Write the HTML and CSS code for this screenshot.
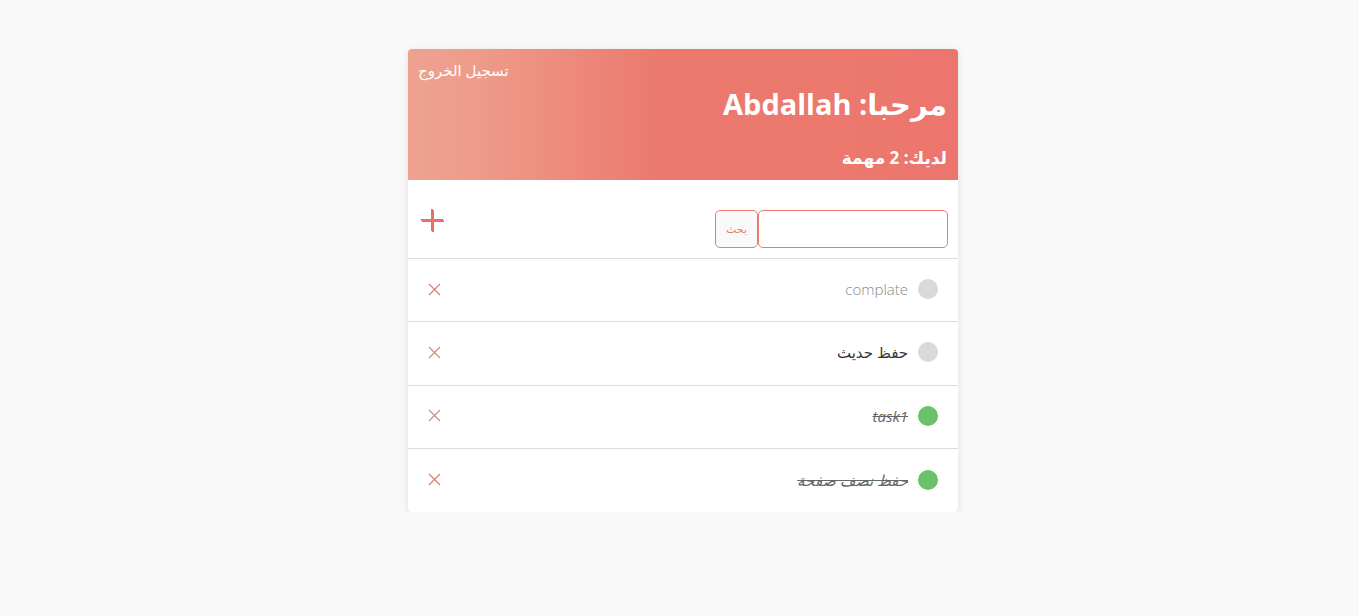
FILE: index.html
```html
<!DOCTYPE html>
<html lang="ar" dir="rtl">
<head>
<meta charset="utf-8">
<link rel="stylesheet" href="styles.css">
</head>
<body>
<div class="page">
<div class="card">
  <header class="head">
    <div class="logout-row"><a class="logout">تسجيل الخروج</a></div>
    <h1 class="title">مرحبا: Abdallah</h1>
    <h2 class="count">لديك: 2 مهمة</h2>
  </header>
  <div class="toolbar">
    <form class="search">
      <input class="search-input" type="text">
      <button class="search-btn" type="button">بحث</button>
    </form>
    <button class="add" type="button" aria-label="add">
      <svg width="26" height="26" viewBox="0 0 26 26">
        <g stroke="#7f8fd6" stroke-width="2"><line x1="13" y1="2" x2="13" y2="24"/><line x1="2" y1="13" x2="24" y2="13"/></g>
        <g stroke="#e8706a" stroke-width="2"><line x1="12" y1="1" x2="12" y2="23"/><line x1="1" y1="12" x2="23" y2="12"/></g>
      </svg>
    </button>
  </div>
  <ul class="tasks">
    <li class="task"><span class="dot"></span><span class="label light">complate</span><span class="del"><svg width="13" height="13" viewBox="0 0 13 13"><path d="M1 1L12 12M12 1L1 12" stroke="#ec6f6a" stroke-width="1.1"/></svg></span></li>
    <li class="task"><span class="dot"></span><span class="label">حفظ حديث</span><span class="del"><svg width="13" height="13" viewBox="0 0 13 13"><path d="M1 1L12 12M12 1L1 12" stroke="#c98a7a" stroke-width="1.1"/></svg></span></li>
    <li class="task"><span class="dot done"></span><span class="label struck italic">task1</span><span class="del"><svg width="13" height="13" viewBox="0 0 13 13"><path d="M1 1L12 12M12 1L1 12" stroke="#c98a7a" stroke-width="1.1"/></svg></span></li>
    <li class="task"><span class="dot done"></span><span class="label struck italic">حفظ نصف صفحة</span><span class="del"><svg width="13" height="13" viewBox="0 0 13 13"><path d="M1 1L12 12M12 1L1 12" stroke="#ec6f6a" stroke-width="1.1"/></svg></span></li>
  </ul>
</div>
</div>
</body>
</html>
```

FILE: styles.css
```css
* { box-sizing: border-box; }
body {
  margin: 0;
  background: #f9f9f9;
  font-family: "Open Sans", "DejaVu Sans", sans-serif;
  color: #333;
}
.page {
  display: flex;
  justify-content: center;
  padding: 49px 0 0 7px;
}
.card {
  width: 550px;
  background: #fff;
  border-radius: 4px;
  box-shadow: 0 2px 8px rgba(0,0,0,0.1);
  overflow: hidden;
}
.head {
  background: linear-gradient(to left, #ec766d 0%, #eb7a6e 55%, #ee9c8a 88%, #eea290 100%);
  color: #fff;
  padding: 10px 11px 10px;
  display: flex;
  flex-direction: column;
}
.logout-row { display: flex; justify-content: flex-end; }
.logout {
  font-size: 15px;
  line-height: 22px;
  color: #fff;
  margin-left: -1px;
}
.title {
  margin: 3px 0 0;
  font-size: 29px;
  line-height: 40px;
  font-weight: 700;
}
.count {
  margin: 22px 0 0;
  font-size: 17px;
  line-height: 24px;
  font-weight: 700;
}
.toolbar {
  display: flex;
  justify-content: space-between;
  align-items: flex-start;
  padding: 30px 10px 10px 12px;
  border-bottom: 1px solid #dddddd;
  height: 79px;
}
.search { display: flex; margin: 0; }
.search-input {
  width: 190px;
  height: 38px;
  border: 1px solid #ec7a6e;
  border-radius: 5px;
  background: #fff;
  outline: none;
}
.search-btn {
  width: 43px;
  height: 38px;
  border: 1px solid #ec7a6e;
  border-radius: 5px;
  background: #f9f9f9;
  color: #ec7a6e;
  font-family: "DejaVu Sans", sans-serif;
  font-size: 11px;
  padding: 0;
}
.add {
  border: 0;
  background: none;
  padding: 0;
  margin-top: -2px;
  width: 26px;
  height: 26px;
}
.tasks { list-style: none; margin: 0; padding: 0; }
.task {
  display: flex;
  align-items: center;
  height: 63.3px;
  padding: 0 20px 2px 20px;
  border-bottom: 1px solid #dddddd;
}
.task:last-child { border-bottom: 0; }
.dot {
  width: 20px;
  height: 20px;
  border-radius: 50%;
  background: #d9d9d9;
  flex: none;
}
.dot.done { background: #6bc16a; }
.label {
  margin-right: 10px;
  font-size: 15px;
  color: #333;
}
.light { color: #888; font-weight: 300; }
.struck { text-decoration: line-through; color: #666; }
.italic { font-style: italic; }
.del {
  margin-right: auto;
  display: flex;
}
```
